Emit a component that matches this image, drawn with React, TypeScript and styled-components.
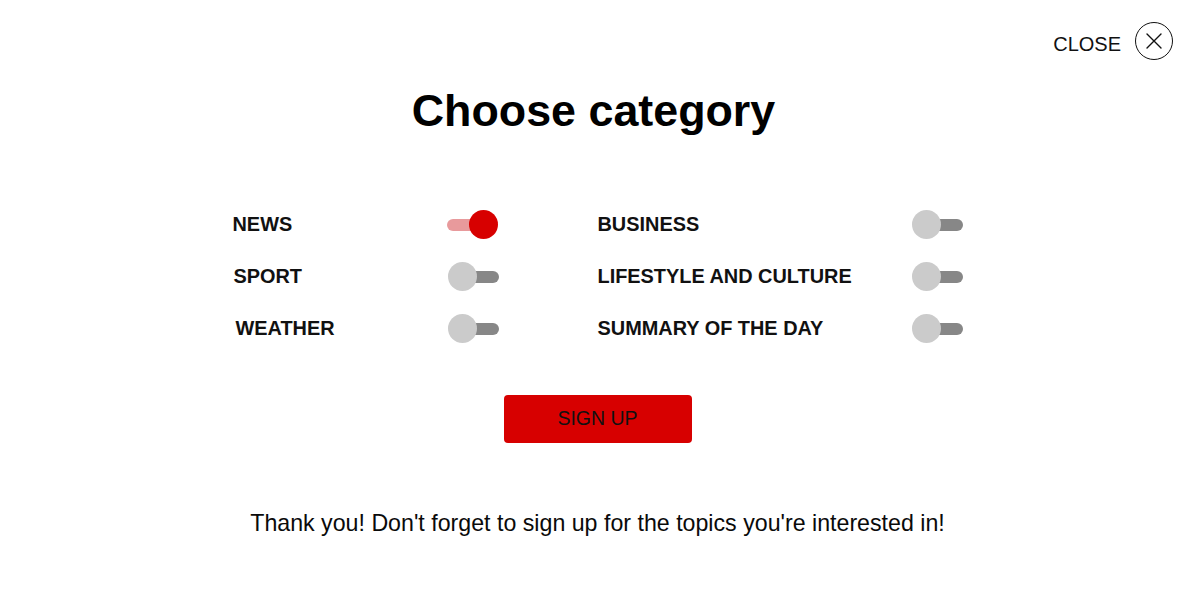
import { useState } from "react";
import styled, { createGlobalStyle, css } from "styled-components";

const GlobalStyle = createGlobalStyle`
  html, body {
    margin: 0;
    padding: 0;
    background: #ffffff;
  }
  body {
    font-family: "Liberation Sans", Arial, sans-serif;
    color: #000000;
  }
`;

const Page = styled.main`
  width: 1189px;
  height: 595px;
  padding-top: 22px;
  box-sizing: border-box;
  display: flex;
  flex-direction: column;
  align-items: center;
  overflow: hidden;
`;

const TopBar = styled.header`
  align-self: stretch;
  display: flex;
  justify-content: flex-end;
  align-items: center;
  gap: 14px;
  padding-right: 16px;
  height: 38px;
`;

const CloseLabel = styled.span`
  font-size: 20px;
  line-height: 1;
  color: #111111;
  padding-top: 6px;
`;

const CloseButton = styled.button`
  width: 38px;
  height: 38px;
  padding: 0;
  border: 1.3px solid #111111;
  border-radius: 50%;
  background: #ffffff;
  display: flex;
  align-items: center;
  justify-content: center;
  cursor: pointer;
`;

const Title = styled.h1`
  margin: 28px 0 0;
  font-size: 44.8px;
  line-height: 1;
  font-weight: 700;
  transform: translateX(-1px);
`;

const Grid = styled.section`
  margin-top: 66px;
  display: grid;
  grid-template-columns: 266px 365px;
  column-gap: 99px;
  grid-auto-rows: 52px;
  transform: translateX(3px);
`;

const Row = styled.div`
  display: flex;
  align-items: center;
  justify-content: space-between;
`;

const Label = styled.span<{ $shift?: number }>`
  font-size: 19.9px;
  font-weight: 700;
  color: #111111;
  padding-left: ${(p) => p.$shift ?? 0}px;
`;

const Switch = styled.button<{ $on: boolean }>`
  position: relative;
  width: 52px;
  height: 30px;
  padding: 0;
  border: 0;
  background: transparent;
  display: flex;
  align-items: center;
  justify-content: ${(p) => (p.$on ? "flex-end" : "flex-start")};
  cursor: pointer;

  &::before {
    content: "";
    position: absolute;
    top: 9px;
    height: 12px;
    border-radius: 6px;
    ${(p) =>
      p.$on
        ? css`
            left: 0;
            right: 12px;
            background: #e89a9c;
          `
        : css`
            left: 12px;
            right: 0;
            background: #878787;
          `}
  }
`;

const Knob = styled.span<{ $on: boolean }>`
  position: relative;
  width: 29px;
  height: 29px;
  border-radius: 50%;
  background: ${(p) => (p.$on ? "#d70000" : "#cbcbcb")};
  margin: 0 ${(p) => (p.$on ? "1px" : "0")} 0 ${(p) => (p.$on ? "0" : "1px")};
`;

const SignUp = styled.button`
  margin-top: 40px;
  width: 188px;
  height: 48px;
  border: 0;
  border-radius: 4px;
  background: #d70000;
  color: #111111;
  font-family: "Liberation Sans", Arial, sans-serif;
  font-size: 19.5px;
  cursor: pointer;
  transform: translateX(3px);
`;

const Note = styled.p`
  margin: 69px 0 0;
  font-size: 23.2px;
  line-height: 1;
  color: #0a0a0a;
  transform: translateX(3px);
`;

type Topic = { name: string; shift?: number };

const topics: Topic[] = [
  { name: "NEWS" },
  { name: "BUSINESS" },
  { name: "SPORT", shift: 1 },
  { name: "LIFESTYLE AND CULTURE" },
  { name: "WEATHER", shift: 3 },
  { name: "SUMMARY OF THE DAY" },
];

export default function App() {
  const [selected, setSelected] = useState<Record<string, boolean>>({
    NEWS: true,
  });

  const toggle = (name: string) =>
    setSelected((s) => ({ ...s, [name]: !s[name] }));

  return (
    <>
      <GlobalStyle />
      <Page>
        <TopBar>
          <CloseLabel>CLOSE</CloseLabel>
          <CloseButton aria-label="Close">
            <svg width="20" height="20" viewBox="0 0 20 20">
              <path
                d="M3 3 L17 17 M17 3 L3 17"
                stroke="#111"
                strokeWidth="1.4"
                strokeLinecap="round"
              />
            </svg>
          </CloseButton>
        </TopBar>

        <Title>Choose category</Title>

        <Grid>
          {topics.map((t) => (
            <Row key={t.name}>
              <Label $shift={t.shift}>{t.name}</Label>
              <Switch
                $on={!!selected[t.name]}
                onClick={() => toggle(t.name)}
                aria-label={t.name}
              >
                <Knob $on={!!selected[t.name]} />
              </Switch>
            </Row>
          ))}
        </Grid>

        <SignUp>SIGN UP</SignUp>

        <Note>Thank you! Don't forget to sign up for the topics you're interested in!</Note>
      </Page>
    </>
  );
}
